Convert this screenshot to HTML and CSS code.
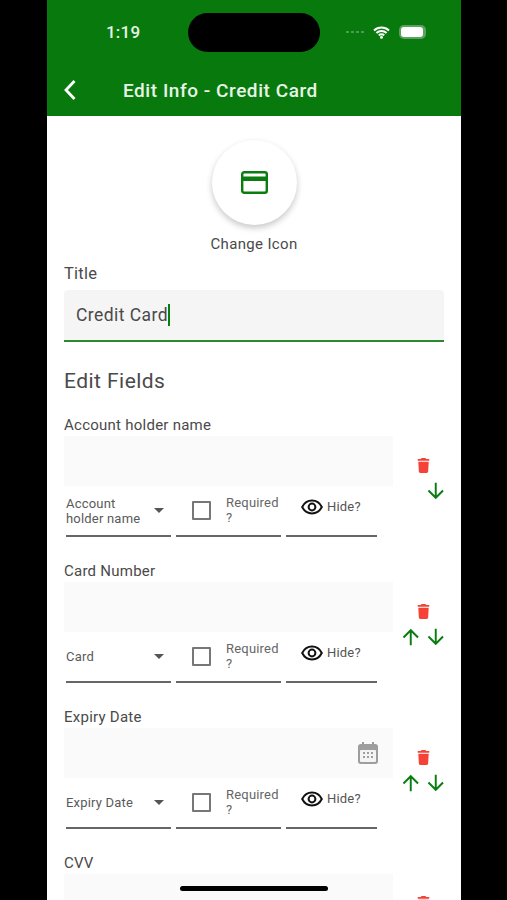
FILE: index.html
```html
<!doctype html>

<html lang="en">
<head>
    <meta charset="utf-8">
    <title>Edit Info - Credit Card</title>
    <link rel="stylesheet" href="styles.css">
</head>

<body>
<svg class="defs" width="0" height="0">
    <symbol id="trash" viewBox="0 0 14 16"><path d="M5 0h4l1 1h3.200v2H.8V1H4z"/><path d="M1.400 4h11.200l-.6 10.400c0 .9-.7 1.600-1.600 1.600H3.600c-.9 0-1.600-.7-1.600-1.600z"/></symbol>
    <symbol id="up" viewBox="0 0 18 18"><path d="M9 17.500V2M1.500 9.500 9 2l7.500 7.500" fill="none" stroke="currentColor" stroke-width="2"/></symbol>
    <symbol id="down" viewBox="0 0 18 18"><path d="M9 .5V16M1.500 8.500 9 16l7.500-7.500" fill="none" stroke="currentColor" stroke-width="2"/></symbol>
    <symbol id="eye" viewBox="0 0 22 16"><path d="M1.200 8C3.200 4 6.800 1.600 11 1.600S18.800 4 20.800 8c-2 4-5.600 6.400-9.800 6.400S3.200 12 1.200 8z" fill="none" stroke="currentColor" stroke-width="2"/><circle cx="11" cy="8" r="3.400" fill="none" stroke="currentColor" stroke-width="2"/></symbol>
</svg>
<div class="screen">
    <div class="app-bar">
        <div class="status-bar">
            <span class="clock">1:19</span>
            <span class="status-icons">
                <span class="signal"><i></i><i></i><i></i><i></i></span>
                <svg class="wifi" width="17" height="13" viewBox="0 0 17 13"><path d="M1 4.500a10.800 10.800 0 0 1 15 0M3.400 7a7.300 7.300 0 0 1 10.200 0M5.800 9.400a3.800 3.800 0 0 1 5.400 0" fill="none" stroke="#fff" stroke-width="2"/><circle cx="8.500" cy="11.300" r="1.500" fill="#fff"/></svg>
                <span class="battery"><span class="battery-fill"></span></span>
            </span>
        </div>
        <div class="toolbar">
            <svg class="back" width="14" height="22" viewBox="0 0 14 22"><path d="M11.500 2 3 11l8.500 9" fill="none" stroke="#fff" stroke-width="2.800"/></svg>
            <span class="toolbar-title">Edit Info - Credit Card</span>
        </div>
    </div>

    <div class="content">
        <div class="icon-picker">
            <div class="icon-circle">
                <svg width="27" height="23" viewBox="0 0 27 23"><rect x="1.200" y="1.200" width="24.600" height="20.600" rx="2" fill="none" stroke="#0a7d10" stroke-width="2.400"/><rect x="1" y="5.500" width="25" height="4.500" fill="#0a7d10"/></svg>
            </div>
            <div class="icon-caption">Change Icon</div>
        </div>

        <label class="title-label">Title</label>
        <div class="title-input"><span>Credit Card</span><span class="caret"></span></div>

        <h2 class="section-title">Edit Fields</h2>

        <div class="field">
            <div class="field-main">
                <div class="field-label">Account holder name</div>
                <div class="field-box"></div>
                <div class="field-options">
                    <div class="option option-type"><span class="type-text">Account<br>holder name</span><span class="arrow-down"></span></div>
                    <div class="option option-required"><span class="checkbox"></span><span class="req-text">Required<br>?</span></div>
                    <div class="option option-hide"><svg class="eye" width="22" height="16"><use href="#eye"/></svg><span class="hide-text">Hide?</span></div>
                </div>
            </div>
            <div class="field-actions">
                <svg class="trash" width="13" height="15"><use href="#trash"/></svg>
                <div class="moves"><span class="move-gap"></span><svg class="move" width="18" height="18"><use href="#down"/></svg></div>
            </div>
        </div>

        <div class="field">
            <div class="field-main">
                <div class="field-label">Card Number</div>
                <div class="field-box"></div>
                <div class="field-options">
                    <div class="option option-type"><span class="type-text">Card</span><span class="arrow-down"></span></div>
                    <div class="option option-required"><span class="checkbox"></span><span class="req-text">Required<br>?</span></div>
                    <div class="option option-hide"><svg class="eye" width="22" height="16"><use href="#eye"/></svg><span class="hide-text">Hide?</span></div>
                </div>
            </div>
            <div class="field-actions">
                <svg class="trash" width="13" height="15"><use href="#trash"/></svg>
                <div class="moves"><svg class="move" width="18" height="18"><use href="#up"/></svg><svg class="move" width="18" height="18"><use href="#down"/></svg></div>
            </div>
        </div>

        <div class="field">
            <div class="field-main">
                <div class="field-label">Expiry Date</div>
                <div class="field-box field-box-date">
                    <svg width="20" height="22" viewBox="0 0 20 22"><path d="M4 0h2v2h8V0h2v2h1.500C18.900 2 20 3.100 20 4.500v15c0 1.400-1.100 2.500-2.500 2.500h-15C1.100 22 0 20.900 0 19.500v-15C0 3.100 1.100 2 2.500 2H4z" fill="#9e9e9e"/><rect x="2" y="8" width="16" height="12" rx="1" fill="#f4f4f4"/><g fill="#9e9e9e"><rect x="5" y="10" width="2" height="2"/><rect x="9" y="10" width="2" height="2"/><rect x="13" y="10" width="2" height="2"/><rect x="5" y="14" width="2" height="2"/><rect x="9" y="14" width="2" height="2"/><rect x="13" y="14" width="2" height="2"/></g></svg>
                </div>
                <div class="field-options">
                    <div class="option option-type"><span class="type-text">Expiry Date</span><span class="arrow-down"></span></div>
                    <div class="option option-required"><span class="checkbox"></span><span class="req-text">Required<br>?</span></div>
                    <div class="option option-hide"><svg class="eye" width="22" height="16"><use href="#eye"/></svg><span class="hide-text">Hide?</span></div>
                </div>
            </div>
            <div class="field-actions">
                <svg class="trash" width="13" height="15"><use href="#trash"/></svg>
                <div class="moves"><svg class="move" width="18" height="18"><use href="#up"/></svg><svg class="move" width="18" height="18"><use href="#down"/></svg></div>
            </div>
        </div>

        <div class="field">
            <div class="field-main">
                <div class="field-label">CVV</div>
                <div class="field-box"></div>
            </div>
            <div class="field-actions">
                <svg class="trash" width="13" height="15"><use href="#trash"/></svg>
            </div>
        </div>
    </div>

    <div class="island"></div>
    <div class="home-indicator"></div>
</div>
</body>
</html>
```

FILE: styles.css
```css
html, body {
	margin: 0;
	height: 900px;
	overflow: hidden;
	background: #000;
	font-family: Roboto, "Liberation Sans", sans-serif;
}
.defs {
	position: absolute;
}
.screen {
	position: relative;
	width: 414px;
	height: 900px;
	margin-left: 47px;
	overflow: hidden;
	background: #fff;
	color: #4a4a4a;
}

/* header */
.app-bar {
	height: 116px;
	background: #087a0d;
	color: #fff;
}
.status-bar {
	display: flex;
	justify-content: space-between;
	align-items: center;
	height: 64px;
	padding: 0 35px 0 59px;
	box-sizing: border-box;
}
.clock {
	font-size: 17px;
	font-weight: 500;
	letter-spacing: 0.2px;
	color: #e8f3e8;
}
.status-icons {
	display: flex;
	align-items: center;
}
.signal {
	display: flex;
	gap: 2px;
	margin-right: 9px;
}
.signal i {
	width: 3px;
	height: 2px;
	background: #4f9a52;
}
.wifi {
	margin-right: 9px;
}
.battery {
	display: block;
	width: 27px;
	height: 14px;
	padding: 2px;
	box-sizing: border-box;
	border-radius: 5px;
	background: #5aa25d;
}
.battery-fill {
	display: block;
	height: 10px;
	width: 22px;
	border-radius: 3px;
	background: #fff;
}
.toolbar {
	display: flex;
	align-items: center;
	height: 52px;
	padding: 0 0 0 16px;
}
.back {
	margin-right: 46px;
}
.toolbar-title {
	font-size: 19px;
	font-weight: 500;
	letter-spacing: 0.55px;
	color: #e8f3e8;
}
.island {
	position: absolute;
	left: 141px;
	top: 13px;
	width: 132px;
	height: 39px;
	border-radius: 20px;
	background: #000;
}
.home-indicator {
	position: absolute;
	left: 133px;
	top: 886px;
	width: 148px;
	height: 5px;
	border-radius: 3px;
	background: #000;
}

/* form */
.content {
	padding: 24px 17px 0;
}
.icon-picker {
	display: flex;
	flex-direction: column;
	align-items: center;
}
.icon-circle {
	display: flex;
	align-items: center;
	justify-content: center;
	width: 85px;
	height: 85px;
	border-radius: 50%;
	background: #fff;
	box-shadow: 0 3px 6px rgba(0, 0, 0, 0.22);
}
.icon-caption {
	margin-top: 11px;
	font-size: 15px;
	line-height: 16px;
	letter-spacing: 0.35px;
}
.title-label {
	display: block;
	margin-top: 12px;
	font-size: 16.500px;
	line-height: 20px;
	letter-spacing: 0.25px;
}
.title-input {
	display: flex;
	align-items: center;
	height: 50px;
	margin-top: 6px;
	padding-left: 12px;
	border-radius: 4px 4px 0 0;
	border-bottom: 2px solid #2b8a30;
	background: #f5f5f5;
	font-size: 17.500px;
	letter-spacing: 0.45px;
}
.caret {
	width: 2px;
	height: 22px;
	background: #0a7d10;
}
.section-title {
	margin: 26px 0 23px;
	font-size: 21px;
	font-weight: 400;
	line-height: 26px;
	letter-spacing: 0.45px;
}
.field {
	display: flex;
	margin-bottom: 26px;
}
.field-main {
	flex: none;
	width: 329px;
}
.field-label {
	font-size: 15px;
	line-height: 16px;
	letter-spacing: 0.25px;
}
.field-box {
	display: flex;
	align-items: center;
	justify-content: flex-end;
	height: 50px;
	margin-top: 3px;
	padding-right: 15px;
	box-sizing: border-box;
	background: #fafafa;
}
.field-options {
	display: flex;
	gap: 5px;
	padding-left: 2px;
}
.option {
	display: flex;
	height: 51px;
	box-sizing: border-box;
	border-bottom: 2px solid #666;
	font-size: 13px;
	line-height: 15px;
	letter-spacing: 0.2px;
}
.option-type {
	width: 105px;
	align-items: center;
	justify-content: space-between;
	padding-right: 7px;
}
.type-text {
	color: #5a5a5a;
}
.arrow-down {
	width: 0;
	height: 0;
	margin-bottom: 1px;
	border-left: 5.500px solid transparent;
	border-right: 5.500px solid transparent;
	border-top: 5.500px solid #555;
}
.option-required {
	width: 105px;
	padding: 9px 0 0 16px;
	gap: 15px;
}
.checkbox {
	flex: none;
	width: 15px;
	height: 15px;
	margin-top: 6px;
	border: 2px solid #777;
	border-radius: 1px;
}
.req-text {
	color: #666;
}
.option-hide {
	width: 91px;
	padding: 13px 0 0 15px;
	gap: 4px;
}
.eye {
	color: #111;
}
.hide-text {
	color: #555;
}
.field-actions {
	flex: none;
	display: flex;
	flex-direction: column;
	width: 44px;
	margin-left: 7px;
	padding-top: 41px;
}
.trash {
	display: block;
	margin-left: 16.500px;
	fill: #f44336;
}
.moves {
	display: flex;
	gap: 7px;
	margin: 9px 0 0 2px;
	color: #0a7d10;
}
.move-gap {
	width: 18px;
}
```
